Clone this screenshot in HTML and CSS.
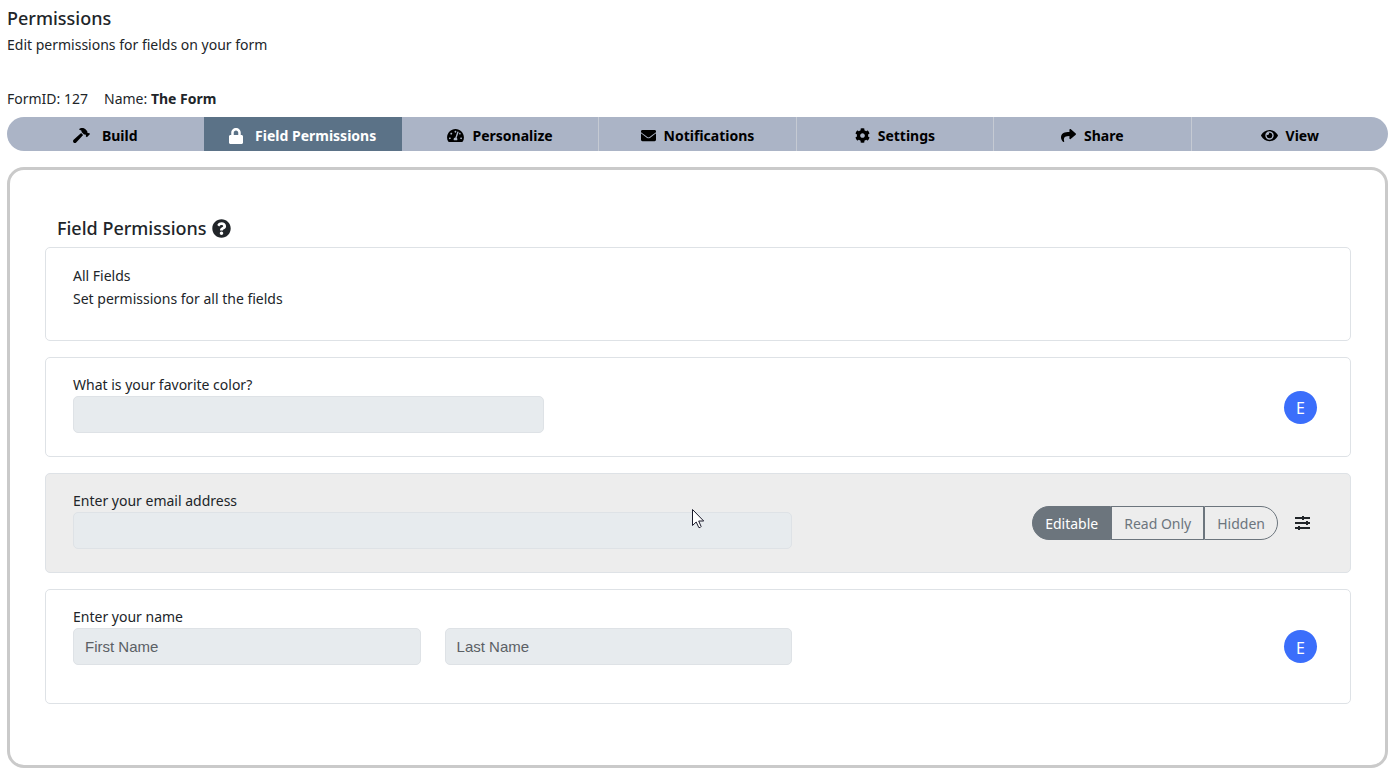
FILE: index.html
```
<!DOCTYPE html>
<html lang="en">
<head>
<meta charset="UTF-8">
<title>Field Permissions</title>
<link rel="stylesheet" href="styles.css">
</head>
<body>
<header class="page-header">
	<h1>Permissions</h1>
	<p class="subtitle">Edit permissions for fields on your form</p>
	<p class="form-info"><span>FormID: 127</span><span>Name: <strong>The Form</strong></span></p>
</header>

<nav class="tabs">
	<a class="tab tab-wide" href="#build">
		<svg class="icon" width="17" height="15" viewBox="0 0 576 512"><path d="M571.31 193.94l-22.63-22.63c-6.25-6.25-16.38-6.25-22.63 0l-11.31 11.31-28.9-28.9c5.63-21.31.36-44.9-16.35-61.61l-45.25-45.25c-62.48-62.48-163.79-62.48-226.28 0l90.51 45.25v18.75c0 16.97 6.74 33.25 18.75 45.25l49.14 49.14c16.71 16.71 40.3 21.98 61.61 16.35l28.9 28.9-11.31 11.31c-6.25 6.25-6.25 16.38 0 22.63l22.63 22.63c6.25 6.25 16.38 6.25 22.63 0l90.51-90.51c6.23-6.24 6.23-16.37-.02-22.62zm-286.72-15.2c-3.7-3.7-6.84-7.79-9.85-11.95L19.64 404.96c-25.57 23.88-26.26 64.19-1.53 88.93s65.05 24.05 88.92-1.53l238.13-255.07c-3.96-2.91-7.9-5.87-11.44-9.41l-49.13-49.14z"/></svg>
		Build
	</a>
	<a class="tab tab-wide active" href="#permissions">
		<svg class="icon" width="14" height="16" viewBox="0 0 448 512"><path d="M400 224h-24v-72C376 68.2 307.8 0 224 0S72 68.2 72 152v72H48c-26.5 0-48 21.5-48 48v192c0 26.5 21.5 48 48 48h352c26.5 0 48-21.5 48-48V272c0-26.5-21.5-48-48-48zm-104 0H152v-72c0-39.7 32.3-72 72-72s72 32.3 72 72v72z"/></svg>
		Field Permissions
	</a>
	<a class="tab" href="#personalize">
		<svg class="icon" width="17" height="15" viewBox="0 0 576 512"><path d="M288 32C128.94 32 0 160.94 0 320c0 52.8 14.25 102.26 39.06 144.8 5.61 9.62 16.3 15.2 27.44 15.2h443c11.14 0 21.83-5.58 27.44-15.2C561.75 422.26 576 372.8 576 320c0-159.06-128.94-288-288-288zm0 64c14.71 0 26.58 10.13 30.32 23.65-1.11 2.26-2.64 4.23-3.45 6.67l-9.22 27.67c-5.13 3.49-10.97 6.01-17.64 6.01-17.67 0-32-14.33-32-32S270.33 96 288 96zM96 384c-17.67 0-32-14.33-32-32s14.33-32 32-32 32 14.33 32 32-14.33 32-32 32zm48-160c-17.67 0-32-14.33-32-32s14.33-32 32-32 32 14.33 32 32-14.33 32-32 32zm246.77-72.41l-61.33 184C343.13 347.33 352 364.54 352 384c0 11.72-3.38 22.55-8.88 32H232.88c-5.5-9.45-8.88-20.28-8.88-32 0-33.94 26.5-61.43 59.9-63.59l61.34-184.01c4.17-12.56 17.73-19.45 30.36-15.17 12.57 4.19 19.35 17.79 15.17 30.36zm14.66 57.2l15.52-46.55c3.47-1.29 7.13-2.23 11.05-2.23 17.67 0 32 14.33 32 32s-14.33 32-32 32c-11.38-.01-20.89-6.28-26.57-15.22zM480 384c-17.67 0-32-14.33-32-32s14.33-32 32-32 32 14.33 32 32-14.33 32-32 32z"/></svg>
		Personalize
	</a>
	<a class="tab" href="#notifications">
		<svg class="icon" width="15" height="15" viewBox="0 0 512 512"><path d="M502.3 190.8c3.9-3.1 9.7-.2 9.7 4.7V400c0 26.5-21.5 48-48 48H48c-26.5 0-48-21.5-48-48V195.6c0-5 5.7-7.8 9.7-4.7 22.4 17.4 52.1 39.5 154.1 113.6 21.1 15.4 56.7 47.8 92.2 47.6 35.7.3 72-32.8 92.3-47.6 102-74.1 131.6-96.3 154-113.7zM256 320c23.2.4 56.6-29.2 73.4-41.4 132.7-96.3 142.8-104.7 173.4-128.7 5.8-4.5 9.2-11.5 9.2-18.9v-19c0-26.5-21.5-48-48-48H48c-26.5 0-48 21.5-48 48v19c0 7.4 3.4 14.3 9.2 18.9 30.6 23.9 40.7 32.4 173.4 128.7 16.8 12.2 50.2 41.8 73.4 41.4z"/></svg>
		Notifications
	</a>
	<a class="tab" href="#settings">
		<svg class="icon" width="15" height="15" viewBox="0 0 512 512"><path d="M487.4 315.7l-42.6-24.6c4.3-23.2 4.3-47 0-70.2l42.6-24.6c4.9-2.8 7.1-8.6 5.5-14-11.1-35.6-30-67.8-54.7-94.6-3.8-4.1-10-5.1-14.8-2.3L380.8 110c-17.9-15.4-38.5-27.3-60.8-35.1V25.8c0-5.6-3.9-10.5-9.4-11.7-36.7-8.2-74.3-7.8-109.2 0-5.5 1.2-9.4 6.1-9.4 11.7V75c-22.2 7.9-42.8 19.8-60.8 35.1L88.7 85.5c-4.9-2.8-11-1.9-14.8 2.3-24.7 26.7-43.6 58.9-54.7 94.6-1.7 5.4.6 11.2 5.5 14L67.3 221c-4.3 23.2-4.3 47 0 70.2l-42.6 24.6c-4.9 2.8-7.1 8.6-5.5 14 11.1 35.6 30 67.8 54.7 94.6 3.8 4.1 10 5.1 14.8 2.3l42.6-24.6c17.9 15.4 38.5 27.3 60.8 35.1v49.2c0 5.6 3.9 10.5 9.4 11.7 36.7 8.2 74.3 7.8 109.2 0 5.5-1.2 9.4-6.1 9.4-11.7v-49.2c22.2-7.9 42.8-19.8 60.8-35.1l42.6 24.6c4.9 2.8 11 1.9 14.8-2.3 24.7-26.7 43.6-58.9 54.7-94.6 1.5-5.5-.7-11.3-5.6-14.1zM256 336c-44.1 0-80-35.9-80-80s35.9-80 80-80 80 35.9 80 80-35.9 80-80 80z"/></svg>
		Settings
	</a>
	<a class="tab" href="#share">
		<svg class="icon" width="15" height="15" viewBox="0 0 512 512"><path d="M503.691 189.836L327.687 37.851C312.281 24.546 288 35.347 288 56.015v80.053C127.371 137.907 0 170.1 0 322.326c0 61.441 39.581 122.309 83.333 154.132 13.653 9.931 33.111-2.533 28.077-18.631C66.066 312.814 132.917 274.316 288 272.085V360c0 20.7 24.3 31.453 39.687 18.164l176.004-152c11.071-9.562 11.086-26.753 0-36.328z"/></svg>
		Share
	</a>
	<a class="tab" href="#view">
		<svg class="icon" width="17" height="15" viewBox="0 0 576 512"><path d="M572.52 241.4C518.29 135.59 410.93 64 288 64S57.68 135.64 3.48 241.41a32.35 32.35 0 0 0 0 29.19C57.71 376.41 165.07 448 288 448s230.32-71.64 284.52-177.41a32.35 32.35 0 0 0 0-29.19zM288 400a144 144 0 1 1 144-144 143.93 143.93 0 0 1-144 144zm0-240a95.31 95.31 0 0 0-25.31 3.79 47.85 47.85 0 0 1-66.9 66.9A95.78 95.78 0 1 0 288 160z"/></svg>
		View
	</a>
</nav>

<main class="panel">
	<h2>
		Field Permissions
		<svg class="icon" width="19" height="19" viewBox="0 0 512 512"><path d="M504 256c0 136.997-111.043 248-248 248S8 392.997 8 256C8 119.083 119.043 8 256 8s248 111.083 248 248zM262.655 90c-54.497 0-89.255 22.957-116.549 63.758-3.536 5.286-2.353 12.415 2.715 16.258l34.699 26.31c5.205 3.947 12.621 3.008 16.665-2.122 17.864-22.658 30.113-35.797 57.303-35.797 20.429 0 45.698 13.148 45.698 32.958 0 14.976-12.363 22.667-32.534 33.976C247.128 238.528 216 254.941 216 296v4c0 6.627 5.373 12 12 12h56c6.627 0 12-5.373 12-12v-1.333c0-28.462 83.186-29.647 83.186-106.667 0-58.002-60.165-102-116.531-102zM256 338c-25.365 0-46 20.635-46 46 0 25.364 20.635 46 46 46s46-20.636 46-46c0-25.364-20.636-46-46-46z"/></svg>
	</h2>

	<section class="card">
		<div class="field field-all">
			<p>All Fields</p>
			<p>Set permissions for all the fields</p>
		</div>
	</section>

	<section class="card">
		<div class="field">
			<label for="color">What is your favorite color?</label>
			<input class="medium" id="color" type="text" disabled>
		</div>
		<div class="actions"><button class="badge" type="button">E</button></div>
	</section>

	<section class="card hover">
		<div class="field">
			<label for="email">Enter your email address</label>
			<input id="email" type="text" disabled>
		</div>
		<div class="actions">
			<div class="btn-group">
				<button class="selected" type="button">Editable</button>
				<button type="button">Read Only</button>
				<button type="button">Hidden</button>
			</div>
			<button class="sliders" type="button" aria-label="More options">
				<svg width="15" height="14" viewBox="0 0 15 14"><path d="M0 2h15M0 7h15M0 12h15" fill="none" stroke="currentColor" stroke-width="2"/><path d="M7 0h2v4H7zM11 5h2v4h-2zM3 10h2v4H3z"/></svg>
			</button>
		</div>
	</section>

	<section class="card">
		<div class="field field-name">
			<label for="first">Enter your name</label>
			<div class="names">
				<input id="first" type="text" placeholder="First Name" disabled>
				<input type="text" placeholder="Last Name" aria-label="Last Name" disabled>
			</div>
		</div>
		<div class="actions"><button class="badge" type="button">E</button></div>
	</section>
</main>

<svg class="cursor" width="13" height="20" viewBox="0 0 13 20"><path d="M.5 .5v16l3.700-3.500 2.600 5.500q1.500 .6 2.300-1L6.700 12h5z" fill="#fff" stroke="#1b1b2b"/></svg>
</body>
</html>
```

FILE: styles.css
```
* {
	box-sizing: border-box;
}

body {
	margin: 0;
	padding: 6px 4px 7px 7px;
	background: #fff;
	color: #212529;
	font: 14px/22px "Noto Sans", "Open Sans", sans-serif;
}

h1, h2, p {
	margin: 0;
}

h1, h2 {
	font-size: 18px;
	line-height: 24px;
	font-weight: 500;
}

button, input {
	font: inherit;
}

.icon {
	flex: none;
	fill: currentColor;
}

.subtitle {
	margin-top: 4px;
}

.form-info {
	display: flex;
	gap: 16px;
	margin-top: 32px;
}

.tabs {
	display: flex;
	height: 34px;
	margin-top: 7px;
	border-radius: 17px;
	overflow: hidden;
	background: #abb4c6;
}

.tab {
	display: flex;
	flex: 1;
	align-items: center;
	justify-content: center;
	gap: 8px;
	padding-top: 3px;
	border-right: 1px solid #c5cad3;
	color: #000;
	font-weight: 700;
	text-decoration: none;
}

.tab:last-child {
	border-right: 0;
}

.tab-wide {
	gap: 12px;
	border-right-color: transparent;
}

.tab.active {
	border-color: #5b7287;
	background: #5b7287;
	color: #fff;
}

.panel {
	display: flex;
	flex-direction: column;
	gap: 16px;
	margin-top: 16px;
	padding: 46px 34px 61px 35px;
	border: 3px solid #cacaca;
	border-radius: 17px;
}

.panel h2 {
	display: flex;
	align-items: center;
	gap: 5px;
	margin-bottom: -9px;
	padding-left: 12px;
}

.card {
	display: grid;
	grid-template-columns: repeat(12, 1fr);
	column-gap: 24px;
	align-items: center;
	padding: 0 27px;
	border: 1px solid #dee2e6;
	border-radius: 5px;
}

.card.hover {
	background: #ededed;
}

.field {
	grid-column: span 7;
	padding: 16px 0 23px;
}

.field-all {
	padding-bottom: 30px;
	line-height: 23px;
}

.field-name {
	padding-bottom: 38px;
}

.field label {
	display: block;
}

.field input {
	display: block;
	width: 100%;
	height: 37px;
	padding: 6px 11px;
	border: 1px solid #dee2e6;
	border-radius: 5px;
	background: #e7ebee;
	color: #212529;
	font: 15px/22px "Liberation Sans", Arial, sans-serif;
}

.field input::placeholder {
	color: #5b6065;
}

/* two thirds of the row, less the column gap */
.field .medium {
	width: calc(200% / 3 - 8px);
}

.names {
	display: grid;
	grid-template-columns: 1fr 1fr;
	gap: 24px;
}

.actions {
	display: flex;
	grid-column: span 5;
	align-items: center;
	justify-content: flex-end;
	gap: 17px;
	padding-right: 6px;
}

.badge {
	width: 33px;
	height: 33px;
	padding: 2px 0 0;
	border: 0;
	border-radius: 50%;
	background: #3b6efb;
	color: #fff;
	font-size: 16px;
}

.btn-group {
	display: flex;
}

.btn-group button {
	height: 34px;
	padding: 2px 12px 0;
	border: 1px solid #6c757d;
	background: transparent;
	color: #6c757d;
}

.btn-group button:first-child {
	border-radius: 17px 0 0 17px;
}

.btn-group button:last-child {
	border-radius: 0 17px 17px 0;
}

.btn-group .selected {
	background: #6c757d;
	color: #fff;
}

.sliders {
	display: flex;
	margin-right: 7px;
	padding: 0;
	border: 0;
	background: none;
	color: #212529;
}

.sliders svg {
	fill: currentColor;
}

/* mouse pointer over the email field */
.cursor {
	position: absolute;
	left: 692px;
	top: 509px;
}
```
